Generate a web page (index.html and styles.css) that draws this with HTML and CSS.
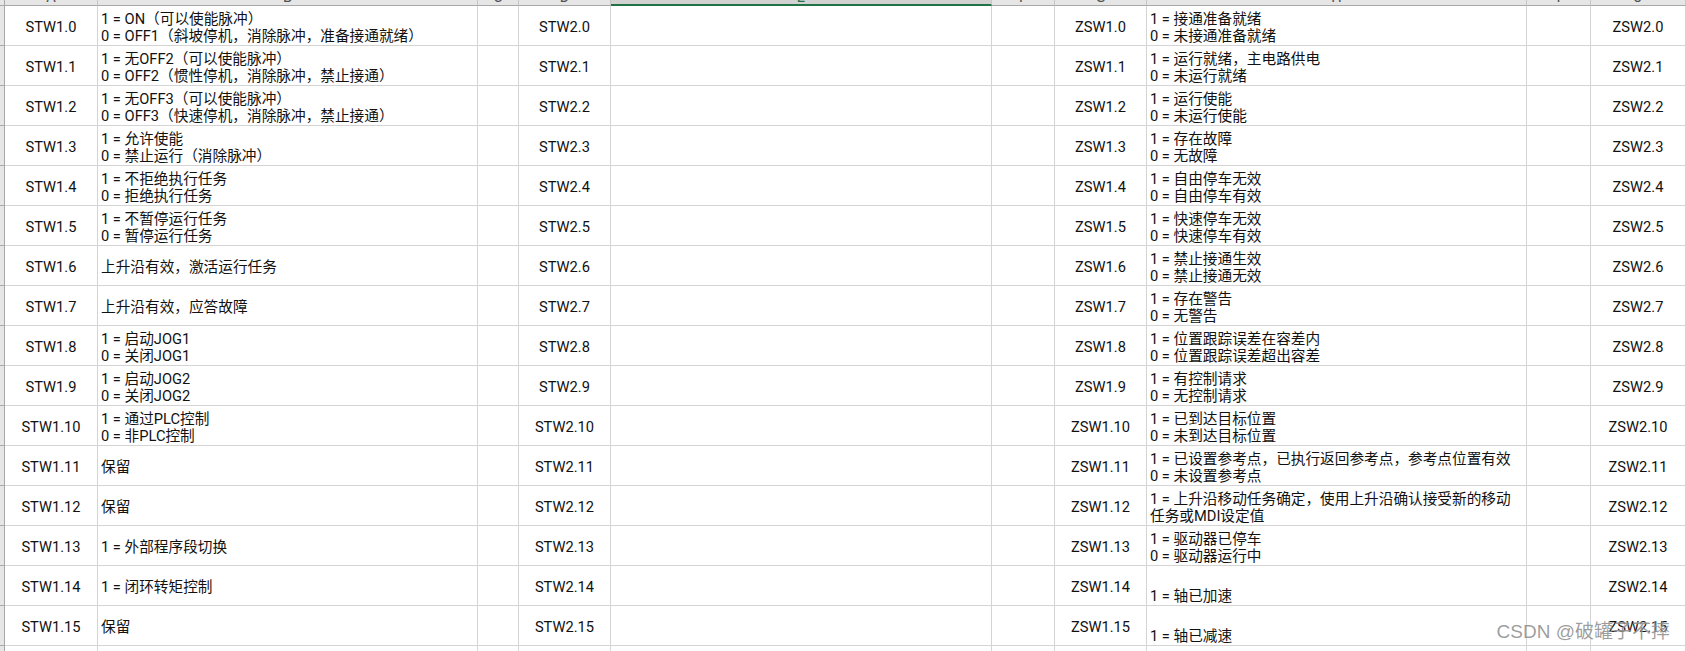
FILE: index.html
```html
<!DOCTYPE html>
<html lang="zh-CN">
<head>
<meta charset="utf-8">
<title>STW / ZSW</title>
<link rel="stylesheet" href="styles.css">
</head>
<body>
<div class="sheet">
  <div class="hd corner"></div>
  <div class="hd"><span>A</span></div>
  <div class="hd"><span>B</span></div>
  <div class="hd"><span>C</span></div>
  <div class="hd"><span>D</span></div>
  <div class="hd sel"><span>E</span></div>
  <div class="hd"><span>F</span></div>
  <div class="hd"><span>G</span></div>
  <div class="hd"><span>H</span></div>
  <div class="hd"><span>I</span></div>
  <div class="hd"><span>J</span></div>

  <div class="rh"></div><div class="c n">STW1.0</div><div class="c t">1 = ON（可以使能脉冲）<br>0 = OFF1（斜坡停机，消除脉冲，准备接通就绪）</div><div class="c"></div><div class="c n">STW2.0</div><div class="c"></div><div class="c"></div><div class="c n">ZSW1.0</div><div class="c t">1 = 接通准备就绪<br>0 = 未接通准备就绪</div><div class="c"></div><div class="c n">ZSW2.0</div>

  <div class="rh"></div><div class="c n">STW1.1</div><div class="c t">1 = 无OFF2（可以使能脉冲）<br>0 = OFF2（惯性停机，消除脉冲，禁止接通）</div><div class="c"></div><div class="c n">STW2.1</div><div class="c"></div><div class="c"></div><div class="c n">ZSW1.1</div><div class="c t">1 = 运行就绪，主电路供电<br>0 = 未运行就绪</div><div class="c"></div><div class="c n">ZSW2.1</div>

  <div class="rh"></div><div class="c n">STW1.2</div><div class="c t">1 = 无OFF3（可以使能脉冲）<br>0 = OFF3（快速停机，消除脉冲，禁止接通）</div><div class="c"></div><div class="c n">STW2.2</div><div class="c"></div><div class="c"></div><div class="c n">ZSW1.2</div><div class="c t">1 = 运行使能<br>0 = 未运行使能</div><div class="c"></div><div class="c n">ZSW2.2</div>

  <div class="rh"></div><div class="c n">STW1.3</div><div class="c t">1 = 允许使能<br>0 = 禁止运行（消除脉冲）</div><div class="c"></div><div class="c n">STW2.3</div><div class="c"></div><div class="c"></div><div class="c n">ZSW1.3</div><div class="c t">1 = 存在故障<br>0 = 无故障</div><div class="c"></div><div class="c n">ZSW2.3</div>

  <div class="rh"></div><div class="c n">STW1.4</div><div class="c t">1 = 不拒绝执行任务<br>0 = 拒绝执行任务</div><div class="c"></div><div class="c n">STW2.4</div><div class="c"></div><div class="c"></div><div class="c n">ZSW1.4</div><div class="c t">1 = 自由停车无效<br>0 = 自由停车有效</div><div class="c"></div><div class="c n">ZSW2.4</div>

  <div class="rh"></div><div class="c n">STW1.5</div><div class="c t">1 = 不暂停运行任务<br>0 = 暂停运行任务</div><div class="c"></div><div class="c n">STW2.5</div><div class="c"></div><div class="c"></div><div class="c n">ZSW1.5</div><div class="c t">1 = 快速停车无效<br>0 = 快速停车有效</div><div class="c"></div><div class="c n">ZSW2.5</div>

  <div class="rh"></div><div class="c n">STW1.6</div><div class="c t">上升沿有效，激活运行任务</div><div class="c"></div><div class="c n">STW2.6</div><div class="c"></div><div class="c"></div><div class="c n">ZSW1.6</div><div class="c t">1 = 禁止接通生效<br>0 = 禁止接通无效</div><div class="c"></div><div class="c n">ZSW2.6</div>

  <div class="rh"></div><div class="c n">STW1.7</div><div class="c t">上升沿有效，应答故障</div><div class="c"></div><div class="c n">STW2.7</div><div class="c"></div><div class="c"></div><div class="c n">ZSW1.7</div><div class="c t">1 = 存在警告<br>0 = 无警告</div><div class="c"></div><div class="c n">ZSW2.7</div>

  <div class="rh"></div><div class="c n">STW1.8</div><div class="c t">1 = 启动JOG1<br>0 = 关闭JOG1</div><div class="c"></div><div class="c n">STW2.8</div><div class="c"></div><div class="c"></div><div class="c n">ZSW1.8</div><div class="c t">1 = 位置跟踪误差在容差内<br>0 = 位置跟踪误差超出容差</div><div class="c"></div><div class="c n">ZSW2.8</div>

  <div class="rh"></div><div class="c n">STW1.9</div><div class="c t">1 = 启动JOG2<br>0 = 关闭JOG2</div><div class="c"></div><div class="c n">STW2.9</div><div class="c"></div><div class="c"></div><div class="c n">ZSW1.9</div><div class="c t">1 = 有控制请求<br>0 = 无控制请求</div><div class="c"></div><div class="c n">ZSW2.9</div>

  <div class="rh"></div><div class="c n">STW1.10</div><div class="c t">1 = 通过PLC控制<br>0 = 非PLC控制</div><div class="c"></div><div class="c n">STW2.10</div><div class="c"></div><div class="c"></div><div class="c n">ZSW1.10</div><div class="c t">1 = 已到达目标位置<br>0 = 未到达目标位置</div><div class="c"></div><div class="c n">ZSW2.10</div>

  <div class="rh"></div><div class="c n">STW1.11</div><div class="c t">保留</div><div class="c"></div><div class="c n">STW2.11</div><div class="c"></div><div class="c"></div><div class="c n">ZSW1.11</div><div class="c t">1 = 已设置参考点，已执行返回参考点，参考点位置有效<br>0 = 未设置参考点</div><div class="c"></div><div class="c n">ZSW2.11</div>

  <div class="rh"></div><div class="c n">STW1.12</div><div class="c t">保留</div><div class="c"></div><div class="c n">STW2.12</div><div class="c"></div><div class="c"></div><div class="c n">ZSW1.12</div><div class="c t">1 = 上升沿移动任务确定，使用上升沿确认接受新的移动<br>任务或MDI设定值</div><div class="c"></div><div class="c n">ZSW2.12</div>

  <div class="rh"></div><div class="c n">STW1.13</div><div class="c t">1 = 外部程序段切换</div><div class="c"></div><div class="c n">STW2.13</div><div class="c"></div><div class="c"></div><div class="c n">ZSW1.13</div><div class="c t">1 = 驱动器已停车<br>0 = 驱动器运行中</div><div class="c"></div><div class="c n">ZSW2.13</div>

  <div class="rh"></div><div class="c n">STW1.14</div><div class="c t">1 = 闭环转矩控制</div><div class="c"></div><div class="c n">STW2.14</div><div class="c"></div><div class="c"></div><div class="c n">ZSW1.14</div><div class="c t">&nbsp;<br>1 = 轴已加速</div><div class="c"></div><div class="c n">ZSW2.14</div>

  <div class="rh"></div><div class="c n">STW1.15</div><div class="c t">保留</div><div class="c"></div><div class="c n">STW2.15</div><div class="c"></div><div class="c"></div><div class="c n">ZSW1.15</div><div class="c t">&nbsp;<br>1 = 轴已减速</div><div class="c"></div><div class="c n">ZSW2.15</div>

  <div class="rh"></div><div class="c"></div><div class="c"></div><div class="c"></div><div class="c"></div><div class="c"></div><div class="c"></div><div class="c"></div><div class="c"></div><div class="c"></div><div class="c"></div>
</div>
<div class="watermark">CSDN @破罐子不摔</div>
</body>
</html>
```

FILE: styles.css
```css
html, body {
  margin: 0;
  padding: 0;
  background: #ffffff;
  overflow: hidden;
}

body {
  width: 1686px;
  height: 651px;
  position: relative;
  font-family: Roboto, "Noto Sans CJK SC", sans-serif;
  font-size: 14.67px;
  color: #111111;
}

.sheet {
  display: grid;
  grid-template-columns: 5px 93px 380px 41px 92px 381px 63px 92px 380px 64px 95px;
  grid-template-rows: 6px repeat(16, 40px) 20px;
}

.hd {
  box-sizing: border-box;
  background: #e6e6e6;
  border-right: 1px solid #c6c6c6;
  border-bottom: 1px solid #a8a8a8;
  overflow: hidden;
  text-align: center;
  color: #505050;
}

.hd span {
  display: block;
  line-height: 20px;
  margin-top: -13px;
}

.hd.corner {
  border-right: 1px solid #a8a8a8;
}

.hd.sel {
  border-bottom: 2px solid #217346;
  color: #217346;
  background: #d2d2d2;
}

.rh {
  box-sizing: border-box;
  background: #e6e6e6;
  border-right: 1px solid #a8a8a8;
  border-bottom: 1px solid #a8a8a8;
}

.c {
  box-sizing: border-box;
  border-right: 1px solid #d4d4d4;
  border-bottom: 1px solid #d4d4d4;
  display: flex;
  flex-direction: column;
  justify-content: center;
  padding-top: 4px;
  line-height: 17px;
  white-space: nowrap;
  overflow: visible;
}

.c.n {
  align-items: center;
  text-align: center;
}

.c.t {
  padding-left: 3px;
}

.watermark {
  position: absolute;
  right: 16px;
  top: 620px;
  font-family: "Liberation Sans", "Noto Sans CJK SC", sans-serif;
  font-size: 19px;
  line-height: 24px;
  color: rgba(90, 90, 90, 0.6);
  text-shadow: 0 0 1px rgba(255, 255, 255, 0.8);
}
```
